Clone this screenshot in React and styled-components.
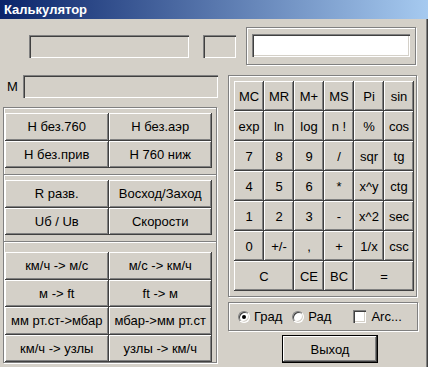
import styled, { createGlobalStyle } from "styled-components";

const GlobalStyle = createGlobalStyle`
	html, body {
		margin: 0;
		padding: 0;
		background: #d4d0c8;
	}
	* {
		box-sizing: border-box;
	}
`;

const leftButtons = [
	["Н без.760", "Н без.аэр", "Н без.прив", "Н 760 ниж"],
	["R разв.", "Восход/Заход", "Uб / Uв", "Скорости"],
	[
		"км/ч -> м/с",
		"м/с -> км/ч",
		"м -> ft",
		"ft -> м",
		"мм рт.ст->мбар",
		"мбар->мм рт.ст",
		"км/ч -> узлы",
		"узлы -> км/ч",
	],
];

const keys = [
	"MC", "MR", "M+", "MS", "Pi", "sin",
	"exp", "ln", "log", "n !", "%", "cos",
	"7", "8", "9", "/", "sqr", "tg",
	"4", "5", "6", "*", "x^y", "ctg",
	"1", "2", "3", "-", "x^2", "sec",
	"0", "+/-", ",", "+", "1/x", "csc",
];

function App() {
	return (
		<>
			<GlobalStyle />
			<StyledWindow>
				<StyledTitle>Калькулятор</StyledTitle>
				<StyledBody>
					<StyledLeftCol>
						<StyledFieldsRow>
							<StyledField $width={160} />
							<StyledField $width={33} />
						</StyledFieldsRow>
						<StyledMemRow>
							<span>M</span>
							<StyledField $width={195} />
						</StyledMemRow>
						<StyledLeftFrame>
							{leftButtons.map((group, i) => (
								<StyledGroup key={i} $index={i}>
									{group.map((label) => (
										<StyledButton key={label}>{label}</StyledButton>
									))}
								</StyledGroup>
							))}
						</StyledLeftFrame>
					</StyledLeftCol>

					<StyledRightCol>
						<StyledDisplayFrame>
							<StyledField $width={158} $white />
						</StyledDisplayFrame>
						<StyledKeypadFrame>
							<StyledKeypad>
								{keys.map((k) => (
									<StyledKey key={k}>{k}</StyledKey>
								))}
								<StyledKey $span={2}>C</StyledKey>
								<StyledKey>CE</StyledKey>
								<StyledKey>BC</StyledKey>
								<StyledKey $span={2}>=</StyledKey>
							</StyledKeypad>
						</StyledKeypadFrame>
						<StyledOptions>
							<StyledOption>
								<StyledRadio $checked />
								Град
							</StyledOption>
							<StyledOption>
								<StyledRadio />
								Рад
							</StyledOption>
							<StyledOption $push>
								<StyledCheck />
								Arc...
							</StyledOption>
						</StyledOptions>
						<StyledExit>Выход</StyledExit>
					</StyledRightCol>
				</StyledBody>
			</StyledWindow>
		</>
	);
}

export default App;

const StyledWindow = styled.div`
	width: 428px;
	height: 367px;
	overflow: hidden;
	background: #d4d0c8;
	box-shadow: inset -1px 0 #404040, inset -2px 0 #808080;
	font-family: "Liberation Sans", Arial, sans-serif;
	font-size: 13px;
	color: #000000;
`;

const StyledTitle = styled.div`
	height: 19px;
	padding-left: 4px;
	display: flex;
	align-items: center;
	background: linear-gradient(to right, #0a246a, #a6caf0);
	color: #ffffff;
	font-weight: 700;
	font-size: 13px;
`;

const StyledBody = styled.div`
	display: flex;
	padding-left: 3px;
`;

const StyledLeftCol = styled.div`
	width: 215px;
	flex-shrink: 0;
	display: flex;
	flex-direction: column;
`;

const StyledFieldsRow = styled.div`
	display: flex;
	gap: 14px;
	margin-top: 16px;
	margin-left: 26px;
`;

const StyledField = styled.div`
	width: ${(p) => p.$width}px;
	flex-shrink: 0;
	height: 23px;
	background: ${(p) => (p.$white ? "#ffffff" : "#d4d0c8")};
	box-shadow: inset 1px 1px #808080, inset 2px 2px #404040,
		inset -1px -1px #ffffff, inset -2px -2px #d4d0c8;
`;

const StyledMemRow = styled.div`
	display: flex;
	align-items: center;
	gap: 5px;
	margin-top: 17px;
	padding-left: 4px;

	span {
		font-size: 13px;
		width: 11px;
	}
`;

const StyledLeftFrame = styled.div`
	margin-top: 9px;
	width: 214px;
	height: 256px;
	border: 1px solid #808080;
	box-shadow: inset 1px 1px #ffffff, 1px 1px #ffffff;
	padding: 0 4px 0 1px;
`;

const StyledGroup = styled.div`
	display: grid;
	grid-template-columns: 1fr 1fr;
	grid-auto-rows: 27.5px;
	margin: ${(p) => (p.$index === 0 ? "0" : "1px")} -4px 0 -1px;
	padding: ${(p) => (p.$index === 2 ? "10px" : "5px")} 4px 5px 1px;
	border-top: ${(p) => (p.$index === 0 ? "none" : "1px solid #808080")};
	box-shadow: ${(p) => (p.$index === 0 ? "none" : "inset 0 1px #ffffff")};
`;

const StyledButton = styled.button`
	font-family: inherit;
	font-size: 13px;
	color: #000000;
	background: #d4d0c8;
	border: none;
	padding: 0;
	white-space: nowrap;
	box-shadow: inset -1px -1px #404040, inset 1px 1px #ffffff,
		inset -2px -2px #808080, inset 2px 2px #d4d0c8;
`;

const StyledRightCol = styled.div`
	margin-left: 9px;
	width: 192px;
	display: flex;
	flex-direction: column;
`;

const StyledDisplayFrame = styled.div`
	margin-top: 8px;
	margin-left: 19px;
	width: 170px;
	height: 38px;
	border: 1px solid #808080;
	box-shadow: inset 1px 1px #ffffff, 1px 1px #ffffff;
	padding: 6px 0 0 5px;
`;

const StyledKeypadFrame = styled.div`
	margin-top: 10px;
	margin-left: 1px;
	width: 189px;
	height: 222px;
	border: 1px solid #808080;
	box-shadow: inset 1px 1px #ffffff, 1px 1px #ffffff;
	padding: 5px 0 0 5px;
`;

const StyledKeypad = styled.div`
	display: grid;
	grid-template-columns: repeat(6, 30px);
	grid-auto-rows: 30px;
`;

const StyledKey = styled(StyledButton)`
	grid-column: span ${(p) => p.$span || 1};
`;

const StyledOptions = styled.div`
	margin-top: 5px;
	margin-left: 1px;
	width: 190px;
	height: 29px;
	border: 1px solid #808080;
	box-shadow: inset 1px 1px #ffffff, 1px 1px #ffffff;
	display: flex;
	align-items: center;
	padding-left: 9px;
	gap: 10px;
`;

const StyledOption = styled.label`
	display: flex;
	align-items: center;
	gap: 4px;
	font-size: 13px;
	margin-left: ${(p) => (p.$push ? "12px" : "0")};
`;

const StyledRadio = styled.span`
	width: 12px;
	height: 12px;
	border-radius: 50%;
	background: #ffffff;
	border: 1px solid;
	border-color: #808080 #ffffff #ffffff #808080;
	box-shadow: inset 1px 1px #404040, inset -1px -1px #d4d0c8;
	display: flex;
	align-items: center;
	justify-content: center;

	&::after {
		content: "";
		width: 4px;
		height: 4px;
		border-radius: 50%;
		background: ${(p) => (p.$checked ? "#000000" : "transparent")};
	}
`;

const StyledCheck = styled.span`
	width: 13px;
	height: 13px;
	background: #ffffff;
	box-shadow: inset 1px 1px #808080, inset 2px 2px #404040,
		inset -1px -1px #ffffff, inset -2px -2px #d4d0c8;
	margin-right: 1px;
`;

const StyledExit = styled.button`
	margin-top: 4px;
	margin-left: 55px;
	width: 96px;
	height: 28px;
	padding: 0;
	font-family: inherit;
	font-size: 13px;
	color: #000000;
	background: #d4d0c8;
	border: 1px solid #000000;
	box-shadow: inset -1px -1px #404040, inset 1px 1px #ffffff,
		inset -2px -2px #808080, inset 2px 2px #d4d0c8;
`;
